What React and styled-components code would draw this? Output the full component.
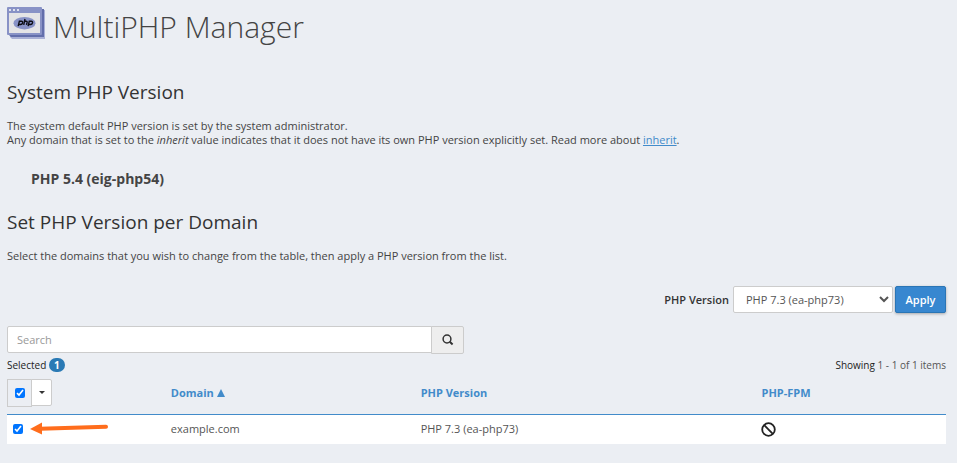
import React, { useState } from 'react';
import styled, { createGlobalStyle } from 'styled-components';

const domains = [
    { name: 'example.com', version: 'PHP 7.3 (ea-php73)' },
];

export default function App() {
    const [selected, setSelected] = useState(['example.com']);
    const [version, setVersion] = useState('ea-php73');
    const allSelected = selected.length === domains.length;

    const toggleAll = () => setSelected(allSelected ? [] : domains.map(d => d.name));
    const toggle = name =>
        setSelected(selected.includes(name) ? selected.filter(n => n !== name) : [...selected, name]);

    return (
        <Page>
            <GlobalStyle />
            <PageHeader>
                <PhpIcon />
                <PageTitle>MultiPHP Manager</PageTitle>
            </PageHeader>

            <Section>
                <SectionTitle>System PHP Version</SectionTitle>
                <Text>
                    The system default PHP version is set by the system administrator.
                    <br />
                    Any domain that is set to the <em>inherit</em> value indicates that it does not have its
                    own PHP version explicitly set. Read more about <a href="#inherit">inherit</a>.
                </Text>
                <SystemVersion>PHP 5.4 (eig-php54)</SystemVersion>
            </Section>

            <Section>
                <SectionTitle>Set PHP Version per Domain</SectionTitle>
                <Text>Select the domains that you wish to change from the table, then apply a PHP version from the list.</Text>
            </Section>

            <ApplyBar>
                <label htmlFor="version">PHP Version</label>
                <VersionSelect id="version" value={version} onChange={e => setVersion(e.target.value)}>
                    <option value="inherit">inherit</option>
                    <option value="ea-php73">PHP 7.3 (ea-php73)</option>
                </VersionSelect>
                <ApplyButton type="button">Apply</ApplyButton>
            </ApplyBar>

            <SearchGroup role="search">
                <SearchInput type="text" placeholder="Search" aria-label="Search" />
                <SearchButton type="button" aria-label="Search">
                    <SearchIcon />
                </SearchButton>
            </SearchGroup>

            <StatusBar>
                <span>
                    Selected <Badge>{selected.length}</Badge>
                </span>
                <span>
                    Showing <Count>1 - 1 of 1 items</Count>
                </span>
            </StatusBar>

            <DomainTable>
                <colgroup>
                    <Col $width="16.6%" />
                    <Col $width="26.6%" />
                    <Col $width="36.3%" />
                    <Col />
                </colgroup>
                <thead>
                    <tr>
                        <SelectHead>
                            <SelectGroup>
                                <SelectAll>
                                    <Checkbox
                                        type="checkbox"
                                        aria-label="Select all"
                                        checked={allSelected}
                                        onChange={toggleAll}
                                    />
                                </SelectAll>
                                <SelectMenu type="button" aria-label="Select options">
                                    <Caret />
                                </SelectMenu>
                            </SelectGroup>
                        </SelectHead>
                        <HeadCell>
                            Domain <SortIcon />
                        </HeadCell>
                        <HeadCell>PHP Version</HeadCell>
                        <HeadCell>PHP-FPM</HeadCell>
                    </tr>
                </thead>
                <tbody>
                    {domains.map(domain => (
                        <tr key={domain.name}>
                            <CheckCell>
                                <Checkbox
                                    type="checkbox"
                                    aria-label={domain.name}
                                    checked={selected.includes(domain.name)}
                                    onChange={() => toggle(domain.name)}
                                />
                                <Arrow />
                            </CheckCell>
                            <Cell>{domain.name}</Cell>
                            <Cell>{domain.version}</Cell>
                            <Cell>
                                <BanIcon />
                            </Cell>
                        </tr>
                    ))}
                </tbody>
            </DomainTable>
        </Page>
    );
}

function PhpIcon() {
    return (
        <svg width="38" height="32" viewBox="0 0 38 32" aria-hidden="true">
            <path d="M3 3h35v29H5l-2-2z" fill="#a9b0d6" />
            <path d="M2 2h35v28H4l-2-2z" fill="#626eab" />
            <rect width="35" height="28" rx="1" fill="#8892c6" />
            <rect x="2" y="6" width="31" height="20" fill="#e4e4e6" />
            <path d="M2 2h2v2H2zM6 2h2v2H6zM10 2h2v2h-2z" fill="#dfe2f0" />
            <ellipse cx="17.5" cy="16.2" rx="11" ry="6.2" fill="#8892c6" />
            <g fill="none" stroke="#0c0c14" strokeWidth="1.4">
                <path d="M11.2 19.2l1.2-5h2q1.5 0 1.2 1.6-.4 1.7-2 1.7h-2" />
                <path d="M18 12l-1.3 5.8M17.5 14.2h1.6q1.2 0 1 1.2l-.6 2.4" />
                <path d="M21.1 19.2l1.2-5h2q1.5 0 1.2 1.6-.4 1.7-2 1.7h-2" />
            </g>
        </svg>
    );
}

function SearchIcon() {
    return (
        <svg width="12" height="12" viewBox="0 0 12 12" fill="none" stroke="#333" aria-hidden="true">
            <circle cx="5" cy="5" r="3.9" strokeWidth="1.5" />
            <path d="M7.8 7.8l2.8 2.6" strokeWidth="2" />
        </svg>
    );
}

function SortIcon() {
    return (
        <svg width="8" height="8" viewBox="0 0 8 8" aria-hidden="true">
            <path d="M4 0l4 8H0z" fill="#428bca" />
        </svg>
    );
}

function BanIcon() {
    return (
        <Ban width="15" height="15" viewBox="0 0 15 15" fill="none" stroke="#222" strokeWidth="1.8" role="img" aria-label="Disabled">
            <circle cx="7.5" cy="7.5" r="6.3" />
            <path d="M3.2 3.2l8.6 8.6" />
        </Ban>
    );
}

function Arrow() {
    return (
        <ArrowMark width="78" height="13" viewBox="0 0 78 13" aria-hidden="true">
            <path d="M10 6.8L76 4.8" stroke="#ff6d1c" strokeWidth="4" strokeLinecap="round" />
            <path d="M0 7L12 .5v12z" fill="#ff6d1c" />
        </ArrowMark>
    );
}

const GlobalStyle = createGlobalStyle`
    * {
        box-sizing: border-box;
    }
    body {
        margin: 0;
        background: #ebeef3;
        color: #444;
        font-family: "Open Sans", sans-serif;
        font-size: 11px;
        line-height: 14px;
    }
    button, input, select {
        font: inherit;
        color: inherit;
    }
    a {
        color: #428bca;
    }
`;

const Page = styled.main`
    padding: 7px 11px 20px 7px;
`;

const PageHeader = styled.header`
    display: flex;
    gap: 8px;
    margin-bottom: 34px;
`;

const PageTitle = styled.h1`
    margin: 0;
    font-size: 30px;
    font-weight: 300;
    line-height: 40px;
`;

const Section = styled.section`
    margin-bottom: 23px;
`;

const SectionTitle = styled.h2`
    margin: 0 0 16px;
    color: #333;
    font-size: 19px;
    font-weight: 400;
    line-height: 22px;
`;

const Text = styled.p`
    margin: 0;
`;

const SystemVersion = styled.p`
    margin: 23px 24px 0;
    font-size: 14px;
    font-weight: 700;
    line-height: 18px;
`;

const ApplyBar = styled.div`
    display: flex;
    justify-content: flex-end;
    align-items: center;
    margin-bottom: 13px;
    color: #333;
    font-weight: 600;

    label {
        margin-right: 4px;
    }
`;

const VersionSelect = styled.select`
    width: 160px;
    height: 27px;
    margin-right: 2px;
    padding: 0 8px;
    border: 1px solid #ccc;
    border-radius: 2px;
    background-color: #fff;
    color: #555;
    font-weight: 400;
`;

const ApplyButton = styled.button`
    width: 51px;
    height: 27px;
    padding: 0;
    border: 1px solid #2a75b5;
    border-radius: 2px;
    background: #3787d0;
    box-shadow: 0 1px 3px rgba(0, 0, 0, 0.3);
    color: #fff;
`;

const SearchGroup = styled.div`
    display: flex;
    width: 457px;
    max-width: 100%;
    margin-bottom: 4px;
`;

const SearchInput = styled.input`
    flex: 1;
    min-width: 0;
    height: 27px;
    padding: 0 9px;
    border: 1px solid #ccc;
    border-radius: 2px 0 0 2px;
    background: #fff;

    &::placeholder {
        color: #999;
    }
`;

const SearchButton = styled.button`
    display: flex;
    justify-content: center;
    align-items: center;
    width: 33px;
    height: 28px;
    margin-left: -1px;
    padding: 0;
    border: 1px solid #ccc;
    border-radius: 0 2px 2px 0;
    background: #eee;
`;

const StatusBar = styled.div`
    display: flex;
    justify-content: space-between;
    margin-bottom: 7px;
    color: #222;
    font-size: 10px;
`;

const Badge = styled.span`
    display: inline-block;
    width: 16px;
    border-radius: 7px;
    background: #2a7ab5;
    color: #fff;
    font-weight: 700;
    text-align: center;
`;

const Count = styled.span`
    color: #555;
`;

const DomainTable = styled.table`
    width: 100%;
    border-collapse: collapse;
    table-layout: fixed;
`;

const Col = styled.col`
    width: ${props => props.$width || 'auto'};
`;

const HeadCell = styled.th`
    padding: 0 8px 7px;
    border-bottom: 1px solid #428bca;
    color: #428bca;
    font-weight: 700;
    text-align: left;
`;

const SelectHead = styled(HeadCell)`
    padding: 0 0 7px;
`;

const SelectGroup = styled.div`
    display: flex;
    align-items: flex-start;
`;

const SelectAll = styled.label`
    display: flex;
    justify-content: center;
    align-items: center;
    width: 25px;
    height: 28px;
    border: 1px solid #ccc;
`;

const SelectMenu = styled.button`
    display: flex;
    justify-content: center;
    align-items: center;
    width: 21px;
    height: 27px;
    margin-left: -1px;
    padding: 0;
    border: 1px solid #ccc;
    border-radius: 0 2px 2px 0;
    background: #fff;
`;

const Caret = styled.span`
    border-top: 3px solid #333;
    border-right: 3px solid transparent;
    border-left: 3px solid transparent;
`;

const Checkbox = styled.input`
    display: block;
    width: 10px;
    height: 10px;
    margin: 0;
    accent-color: #0075ff;
`;

const Cell = styled.td`
    height: 29px;
    padding: 0 8px;
    background: #fff;
    color: #555;
`;

const CheckCell = styled(Cell)`
    position: relative;
    padding: 0 6px;
`;

const Ban = styled.svg`
    display: block;
`;

/* pointer drawn over the row, next to its tick box */
const ArrowMark = styled.svg`
    position: absolute;
    top: 7px;
    left: 23px;
`;
